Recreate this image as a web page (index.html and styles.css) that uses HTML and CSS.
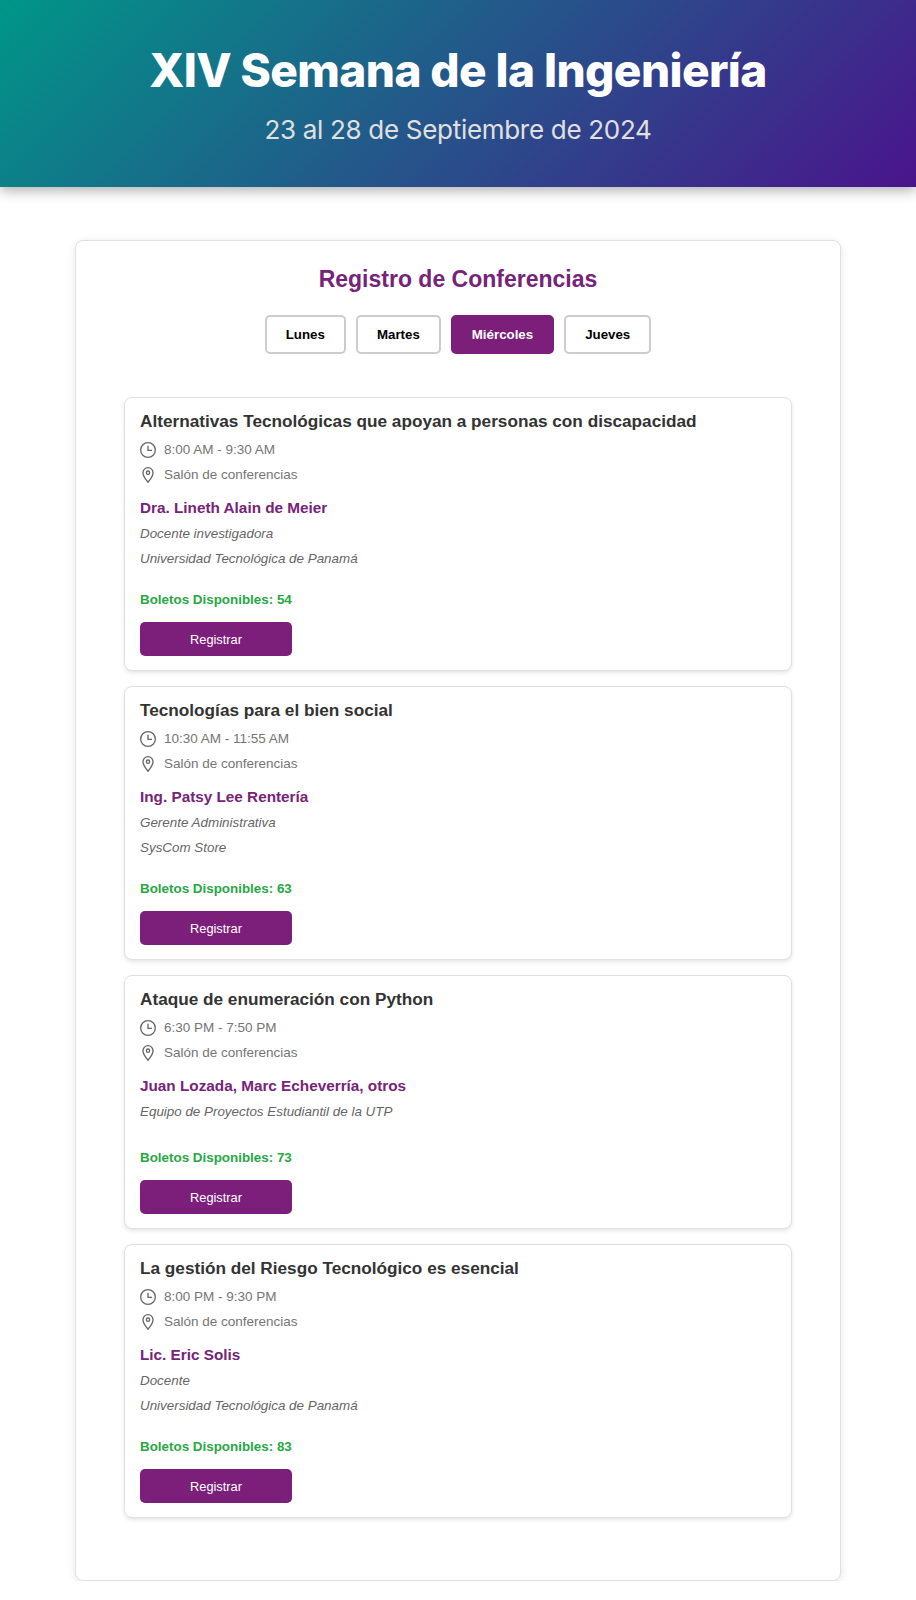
FILE: index.html
```html
<!DOCTYPE html>
<html lang="es">
<head>
    <meta charset="UTF-8">
    <meta name="viewport" content="width=device-width, initial-scale=1.0">
    <title>XIV Semana de la Ingeniería</title>
    <link rel="stylesheet" href="styles.css">
</head>
<body>
    <header class="hero">
        <h1>XIV Semana de la Ingeniería</h1>
        <p>23 al 28 de Septiembre de 2024</p>
    </header>

    <main class="panel">
        <h2>Registro de Conferencias</h2>
        <div class="days">
            <button class="day">Lunes</button>
            <button class="day">Martes</button>
            <button class="day active">Miércoles</button>
            <button class="day">Jueves</button>
        </div>

        <div class="list">
            <article class="talk">
                <h3>Alternativas Tecnológicas que apoyan a personas con discapacidad</h3>
                <div class="info">
                    <svg class="icon" viewBox="0 0 24 24"><circle cx="12" cy="12" r="11"/><path d="M12 5.500v7h6"/></svg>
                    <span>8:00 AM - 9:30 AM</span>
                </div>
                <div class="info">
                    <svg class="icon" viewBox="0 0 24 24"><path d="M12 23c-3.500-5-7.500-9-7.500-14.500a7.500 7.500 0 0 1 15 0c0 5.500-4 9.500-7.500 14.500z"/><circle cx="12" cy="8.500" r="2.500"/></svg>
                    <span>Salón de conferencias</span>
                </div>
                <h4>Dra. Lineth Alain de Meier</h4>
                <p class="role">Docente investigadora</p>
                <p class="role">Universidad Tecnológica de Panamá</p>
                <p class="tickets">Boletos Disponibles: 54</p>
                <button class="register">Registrar</button>
            </article>

            <article class="talk">
                <h3>Tecnologías para el bien social</h3>
                <div class="info">
                    <svg class="icon" viewBox="0 0 24 24"><circle cx="12" cy="12" r="11"/><path d="M12 5.500v7h6"/></svg>
                    <span>10:30 AM - 11:55 AM</span>
                </div>
                <div class="info">
                    <svg class="icon" viewBox="0 0 24 24"><path d="M12 23c-3.500-5-7.500-9-7.500-14.500a7.500 7.500 0 0 1 15 0c0 5.500-4 9.500-7.500 14.500z"/><circle cx="12" cy="8.500" r="2.500"/></svg>
                    <span>Salón de conferencias</span>
                </div>
                <h4>Ing. Patsy Lee Rentería</h4>
                <p class="role">Gerente Administrativa</p>
                <p class="role">SysCom Store</p>
                <p class="tickets">Boletos Disponibles: 63</p>
                <button class="register">Registrar</button>
            </article>

            <article class="talk short">
                <h3>Ataque de enumeración con Python</h3>
                <div class="info">
                    <svg class="icon" viewBox="0 0 24 24"><circle cx="12" cy="12" r="11"/><path d="M12 5.500v7h6"/></svg>
                    <span>6:30 PM - 7:50 PM</span>
                </div>
                <div class="info">
                    <svg class="icon" viewBox="0 0 24 24"><path d="M12 23c-3.500-5-7.500-9-7.500-14.500a7.500 7.500 0 0 1 15 0c0 5.500-4 9.500-7.500 14.500z"/><circle cx="12" cy="8.500" r="2.500"/></svg>
                    <span>Salón de conferencias</span>
                </div>
                <h4>Juan Lozada, Marc Echeverría, otros</h4>
                <p class="role">Equipo de Proyectos Estudiantil de la UTP</p>
                <p class="tickets">Boletos Disponibles: 73</p>
                <button class="register">Registrar</button>
            </article>

            <article class="talk">
                <h3>La gestión del Riesgo Tecnológico es esencial</h3>
                <div class="info">
                    <svg class="icon" viewBox="0 0 24 24"><circle cx="12" cy="12" r="11"/><path d="M12 5.500v7h6"/></svg>
                    <span>8:00 PM - 9:30 PM</span>
                </div>
                <div class="info">
                    <svg class="icon" viewBox="0 0 24 24"><path d="M12 23c-3.500-5-7.500-9-7.500-14.500a7.500 7.500 0 0 1 15 0c0 5.500-4 9.500-7.500 14.500z"/><circle cx="12" cy="8.500" r="2.500"/></svg>
                    <span>Salón de conferencias</span>
                </div>
                <h4>Lic. Eric Solis</h4>
                <p class="role">Docente</p>
                <p class="role">Universidad Tecnológica de Panamá</p>
                <p class="tickets">Boletos Disponibles: 83</p>
                <button class="register">Registrar</button>
            </article>
        </div>
    </main>
</body>
</html>
```

FILE: styles.css
```css
* {
    box-sizing: border-box;
}

body {
    margin: 0;
    font-family: "Liberation Sans", Arial, sans-serif;
    background-color: #fff;
    color: #333;
}

.hero {
    height: 187px;
    padding-top: 42px;
    text-align: center;
    color: #fff;
    background: linear-gradient(135deg, #009688 0%, #4a148c 100%);
    box-shadow: 0 4px 12px rgba(0, 0, 0, 0.3);
}

.hero h1 {
    margin: 0;
    font-family: Inter, sans-serif;
    font-size: 46px;
    line-height: 56px;
    font-weight: 800;
    letter-spacing: -0.6px;
}

.hero p {
    margin: 17px 0 0;
    font-family: Inter, sans-serif;
    font-size: 26px;
    line-height: 30px;
    font-weight: 400;
    letter-spacing: -0.3px;
    color: #e0e0e0;
}

.panel {
    width: 766px;
    margin: 53px auto 0;
    padding: 24px 48px 62px;
    background-color: #fff;
    border: 1px solid #e0e0e0;
    border-radius: 8px;
    box-shadow: 0 2px 8px rgba(0, 0, 0, 0.1);
}

.panel h2 {
    margin: 0;
    font-size: 23px;
    line-height: 28px;
    font-weight: 700;
    text-align: center;
    color: #76237a;
}

.days {
    display: flex;
    justify-content: center;
    gap: 10px;
    margin-top: 22px;
}

.day {
    height: 39px;
    padding: 0 19px;
    font-family: inherit;
    font-size: 13.3px;
    font-weight: 700;
    color: #000;
    background-color: #fff;
    border: 2px solid #ccc;
    border-radius: 5px;
}

.day.active {
    color: #fff;
    background-color: #7b1f7b;
    border-color: #7b1f7b;
}

.list {
    display: flex;
    flex-direction: column;
    gap: 15px;
    margin-top: 43px;
}

.talk {
    padding: 13px 15px 14px;
    background-color: #fff;
    border: 1px solid #e0e0e0;
    border-radius: 8px;
    box-shadow: 0 2px 4px rgba(0, 0, 0, 0.1);
}

.talk h3 {
    margin: 0 0 6px;
    font-size: 17.2px;
    line-height: 20px;
    font-weight: 700;
    color: #333;
}

.info {
    display: flex;
    align-items: center;
    gap: 8px;
    height: 25px;
    font-size: 13.5px;
    color: #757575;
}

.icon {
    flex: none;
    width: 16px;
    height: 16px;
    fill: none;
    stroke: #666;
    stroke-width: 2;
}

.talk h4 {
    margin: 12px 0 4px;
    font-size: 15.3px;
    line-height: 18px;
    font-weight: 700;
    color: #76237a;
}

.role {
    margin: 0;
    font-size: 13.4px;
    line-height: 25px;
    font-style: italic;
    color: #666;
}

.tickets {
    margin: 22px 0 15px;
    font-size: 13.4px;
    line-height: 14px;
    font-weight: 700;
    color: #28a745;
}

.short .tickets {
    margin-top: 27px;
}

.register {
    display: block;
    width: 152px;
    height: 34px;
    font-family: inherit;
    font-size: 12.8px;
    color: #fff;
    background-color: #7b1f7b;
    border: none;
    border-radius: 5px;
}
```
